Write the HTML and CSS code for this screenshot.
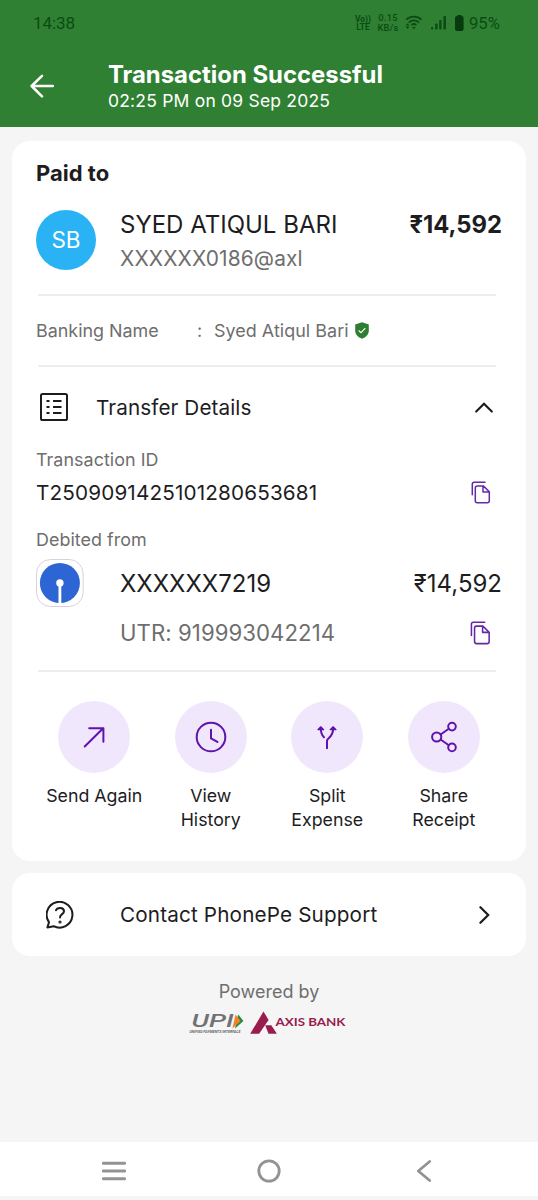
FILE: index.html
```html
<!DOCTYPE html>
<html lang="en">
<head>
<meta charset="utf-8">
<title>Transaction Successful</title>
<link rel="stylesheet" href="styles.css">
</head>
<body>
<header class="top">
  <div class="status">
    <span class="clock">14:38</span>
    <span class="lte"><span>Vo))</span><span>LTE</span></span>
    <span class="rate"><span>0.15</span><span>KB/s</span></span>
    <svg class="wifi" width="18" height="16" viewBox="0 0 18 16" fill="none" stroke="currentColor" stroke-width="1.7">
      <path d="M1.2 4.7a11 11 0 0 1 15.3 0M3.7 7.6a7.2 7.2 0 0 1 10.3 0M6.4 10.2a3.6 3.6 0 0 1 5 0"/>
      <path d="M8.9 14.2l-1.9-2.1h3.8z" fill="currentColor" stroke="none"/>
      <path d="M2.5 8.2l2 2.3h-4zM2.5 13.9l2-2.3h-4z" fill="currentColor" stroke="none"/>
    </svg>
    <svg class="signal" width="16" height="16" viewBox="0 0 16 16" fill="currentColor">
      <rect x="0" y="12" width="2.2" height="2.5" rx=".8"/><rect x="4.2" y="8.5" width="2.4" height="6" rx=".8"/><rect x="8.2" y="5" width="2.4" height="9.5" rx=".8"/><rect x="12.4" y="1" width="2.6" height="13.5" rx=".8"/>
    </svg>
    <svg class="battery" width="9" height="16" viewBox="0 0 9 16" fill="currentColor">
      <rect x="2.2" y="0" width="4.4" height="3" rx="1"/><rect x="0" y="1" width="8.6" height="15" rx="2"/>
    </svg>
    <span class="percent">95%</span>
  </div>
  <div class="bar">
    <svg class="back" width="24" height="24" viewBox="0 0 24 24" fill="none" stroke="#fff" stroke-width="2.5" stroke-linecap="round" stroke-linejoin="round"><path d="M22.8 12H1.8M12 1.8L1.6 12L12 22.4"/></svg>
    <div class="heading">
      <h1 class="title">Transaction Successful</h1>
      <p class="time">02:25 PM on 09 Sep 2025</p>
    </div>
  </div>
</header>

<main class="content">
  <section class="card details">
    <h2 class="paid">Paid to</h2>
    <div class="payee">
      <span class="avatar">SB</span>
      <div class="who">
        <span class="name">SYED ATIQUL BARI</span>
        <span class="vpa">XXXXXX0186@axl</span>
      </div>
      <strong class="amount">₹14,592</strong>
    </div>
    <hr class="rule">
    <div class="banking">
      <span class="bank-label">Banking Name</span><span class="colon">:</span><span class="bank-name">Syed Atiqul Bari</span>
      <svg width="14" height="17" viewBox="0 0 14 17"><path d="M7 .3L13.8 2.6V8.5C13.8 12.5 11 15.3 7 16.7C3 15.3 .2 12.5 .2 8.5V2.6z" fill="#2e7d32"/><path d="M3.7 8.5l2.3 2.2L10.3 6.2" fill="none" stroke="#fff" stroke-width="1.1"/></svg>
    </div>
    <hr class="rule">
    <div class="transfer">
      <svg width="28" height="28" viewBox="0 0 28 28" fill="none" stroke="#1d1d1f" stroke-width="2"><rect x="1" y="1" width="26" height="26" rx="1.6"/><path d="M6.5 8h3M6.5 14h3M6.5 20h3M13 8h8.5M13 14h8.5M13 20h8.5"/></svg>
      <span class="transfer-title">Transfer Details</span>
      <svg class="chevron-up" width="18" height="11" viewBox="0 0 18 11" fill="none" stroke="#1d1d1f" stroke-width="2.1" stroke-linecap="round" stroke-linejoin="miter"><path d="M1.2 9.6L9 1.8L16.8 9.6"/></svg>
    </div>
    <div class="label id-label">Transaction ID</div>
    <div class="line id-line">
      <span class="txn">T2509091425101280653681</span>
      <svg class="copy" width="20" height="23" viewBox="0 0 20 23"><use href="#copy"/></svg>
    </div>
    <div class="label from-label">Debited from</div>
    <div class="line account">
      <svg class="bank-logo" width="48" height="48" viewBox="0 0 48 48"><rect x=".5" y=".5" width="46.6" height="47" rx="14" fill="#fff" stroke="#d8d0df"/><circle cx="23.9" cy="24" r="20" fill="#2d66d4"/><circle cx="23.9" cy="24" r="3.7" fill="#fff"/><path d="M23.9 24v20.5" stroke="#fff" stroke-width="2.8"/></svg>
      <span class="number">XXXXXX7219</span>
      <span class="debit">₹14,592</span>
    </div>
    <div class="line utr-line">
      <span class="utr">UTR: 919993042214</span>
      <svg class="copy" width="21" height="24" viewBox="0 0 20 23"><use href="#copy"/></svg>
    </div>
    <hr class="rule last">
    <div class="actions">
      <div class="action">
        <span class="disc"><svg width="36" height="36" viewBox="0 0 36 36"><path d="M8.7 27.5L27.2 9.3M13.2 9.2H27.4V22.8"/></svg></span>
        <span class="caption">Send Again</span>
      </div>
      <div class="action">
        <span class="disc"><svg width="36" height="36" viewBox="0 0 36 36"><circle cx="18" cy="18" r="14.3"/><path d="M18 10.8v8.6l6.4 3.5"/></svg></span>
        <span class="caption">View<br>History</span>
      </div>
      <div class="action">
        <span class="disc"><svg width="36" height="36" viewBox="0 0 36 36"><path d="M18 29.2V21.8C18 18.4 24.1 19 24.1 9.5M15 18.2C13 16.3 11.8 14 11.8 9.5"/><path d="M8.9 10.6L11.8 7.8L14.7 10.6zM21.2 10.6L24.1 7.8L27 10.6z" fill="#5f13ad" stroke-width="1.2"/></svg></span>
        <span class="caption">Split<br>Expense</span>
      </div>
      <div class="action">
        <span class="disc"><svg width="36" height="36" viewBox="0 0 36 36"><circle cx="10.7" cy="18" r="4.6"/><circle cx="26" cy="7.6" r="3.8"/><circle cx="26" cy="28.4" r="3.8"/><path d="M14.6 15.5L22.8 9.8M14.6 20.5L22.8 26.2"/></svg></span>
        <span class="caption">Share<br>Receipt</span>
      </div>
    </div>
  </section>

  <section class="card support">
    <svg width="28" height="28" viewBox="0 0 28 28" fill="none" stroke="#1d1d1f" stroke-width="2" stroke-linecap="round" stroke-linejoin="round"><path d="M1.4 26.4L3 21.2A12.9 12.9 0 1 1 7.6 25.2z"/><path d="M10 9.3C11 6.2 18 5.8 18 10.3C18 13.4 14 13 14 16.5"/><circle cx="14" cy="21" r=".6"/></svg>
    <span class="support-title">Contact PhonePe Support</span>
    <svg class="chevron-right" width="11" height="18" viewBox="0 0 11 18" fill="none" stroke="#1d1d1f" stroke-width="2.2" stroke-linecap="round"><path d="M1.4 1.2L9.2 9L1.4 16.8"/></svg>
  </section>

  <footer class="powered">
    <span class="powered-text">Powered by</span>
    <div class="brands">
      <svg width="60" height="28" viewBox="-3 -2 60 28">
        <path d="M48.2 3.4L53.4 10L45 17.4z" fill="#238a43"/><path d="M45.6 3.4L50.6 10L42.4 17.4z" fill="#f58220"/>
        <text x="1.5" y="16.2" class="upi" textLength="42" lengthAdjust="spacingAndGlyphs">UPI</text>
        <text x="-.6" y="22.2" class="upi-sub" textLength="51" lengthAdjust="spacingAndGlyphs">UNIFIED PAYMENTS INTERFACE</text>
      </svg>
      <svg width="98" height="28" viewBox="0 -2 98 28" fill="#991c4f">
        <path d="M13.5 .5L18.6 9L9.1 22.8H.2z"/><path d="M15.2 14.2H21.3L26.9 22.8H18.5z"/>
        <text x="25.5" y="15" class="axis" textLength="70" lengthAdjust="spacingAndGlyphs">AXIS BANK</text>
      </svg>
    </div>
  </footer>
</main>

<nav class="nav">
  <svg width="24" height="24" viewBox="0 0 24 24" fill="none" stroke="#939393" stroke-width="2.9" stroke-linecap="round"><path d="M1.3 4.3H22.7M1.3 12H22.7M1.3 19.7H22.7"/></svg>
  <svg width="24" height="24" viewBox="0 0 24 24" fill="none" stroke="#939393" stroke-width="2.8"><circle cx="12" cy="12" r="10.2"/></svg>
  <svg width="24" height="24" viewBox="0 0 24 24" fill="none" stroke="#939393" stroke-width="2.8" stroke-linecap="round" stroke-linejoin="round"><path d="M17.7 2.5L6.3 12L17.7 21.5"/></svg>
</nav>

<svg class="defs" width="0" height="0"><defs>
  <g id="copy" fill="none" stroke="#6429a8" stroke-width="1.5" stroke-linecap="round" stroke-linejoin="round">
    <path d="M1.3 13.8V3.2Q1.3 1.2 3.3 1.2H14"/>
    <path d="M6.3 4.9H12.3L18.3 10.8V19.7Q18.3 21.7 16.3 21.7H6.3Q4.3 21.7 4.3 19.7V6.9Q4.3 4.9 6.3 4.9zM12 5V10.9H18"/>
  </g>
</defs></svg>
</body>
</html>
```
FILE: styles.css
```css
* { box-sizing: border-box; }
body {
  margin: 0;
  min-height: 1200px;
  display: flex;
  flex-direction: column;
  background: #f5f5f5;
  color: #1d1d1f;
  font-family: Inter, "Liberation Sans", sans-serif;
  white-space: nowrap;
}
h1, h2, p, hr { margin: 0; }
svg { display: block; flex: none; }
.defs { display: none; }

.top { height: 127px; background: #308034; }
.status {
  height: 44px;
  padding: 2px 0 0 33px;
  display: flex;
  align-items: center;
  color: #0b4c12;
  font-family: Roboto, sans-serif;
}
.clock { width: 322.5px; font-size: 17px; letter-spacing: -.1px; }
.lte, .rate {
  display: flex;
  flex-direction: column;
  align-items: center;
  font-size: 9.4px;
  font-weight: 500;
}
.lte { width: 15px; font-size: 8.5px; line-height: 8px; font-weight: 700; }
.rate { width: 21px; margin-left: 7px; line-height: 10px; letter-spacing: .2px; }
.wifi { margin-left: 6.5px; }
.signal { margin-left: 7.5px; }
.battery { margin-left: 8px; color: #073a0d; }
.percent { margin-left: 5.5px; font-size: 16.6px; }

.bar { display: flex; align-items: flex-start; padding-left: 30px; }
.back { margin-top: 30px; }
.heading { margin: 16px 0 0 54px; }
.title { font-size: 23.9px; line-height: 29px; font-weight: 700; color: #fff; }
.time { font-size: 17.5px; line-height: 24px; letter-spacing: .2px; color: #fff; }

.content { flex: 1; padding: 14px 12px 0; }
.card { background: #fff; border-radius: 18px; }
.details { height: 720px; padding: 0 24px; }
.paid { font-size: 22px; line-height: 64px; font-weight: 650; }
.payee { height: 89px; padding-top: 5px; display: flex; align-items: flex-start; }
.avatar {
  width: 60px;
  height: 60px;
  margin-right: 24px;
  border-radius: 50%;
  background: #29b3f5;
  color: #fff;
  font-size: 22.5px;
  line-height: 60px;
  text-align: center;
}
.who { flex: 1; display: flex; flex-direction: column; }
.name { font-size: 24px; line-height: 29px; }
.vpa { font-size: 20.9px; line-height: 39px; letter-spacing: .15px; color: #6e6e6e; }
.amount { font-size: 23.8px; line-height: 29px; font-weight: 700; }
.rule { height: 2px; border: 0; margin: 0 6px 0 2px; background: #ededed; }
.banking { height: 69px; padding-bottom: 1px; display: flex; align-items: center; font-size: 17.9px; color: #6e6e6e; }
.bank-label { width: 161px; }
.colon { width: 17px; }
.bank-name { margin-right: 6px; letter-spacing: .05px; }
.transfer { height: 81px; padding: 0 9px 1px 4px; display: flex; align-items: center; }
.transfer-title { flex: 1; margin-left: 28px; font-size: 20.7px; letter-spacing: .1px; }
.label { font-size: 17.9px; line-height: 24px; letter-spacing: .05px; color: #6e6e6e; }
.line { display: flex; align-items: center; }
.id-line { height: 40px; }
.txn, .utr { flex: 1; }
.txn { font-size: 20.7px; letter-spacing: .15px; }
.copy { margin-right: 11px; }
.from-label { margin-top: 16px; }
.account { height: 62px; }
.number { flex: 1; margin-left: 36px; font-size: 24px; }
.debit { font-size: 24px; }
.utr-line { height: 38px; padding-left: 84px; }
.utr { font-size: 22.2px; line-height: 26px; letter-spacing: .05px; color: #6e6e6e; }
.last { margin-top: 18px; }
.actions { display: grid; grid-template-columns: repeat(4, 1fr); padding-top: 28.5px; }
.action { display: flex; flex-direction: column; align-items: center; }
.disc {
  width: 72px;
  height: 72px;
  display: grid;
  place-items: center;
  border-radius: 50%;
  background: #f1e7fc;
}
.disc svg { fill: none; stroke: #5f13ad; stroke-width: 2; stroke-linecap: round; stroke-linejoin: round; }
.caption { margin-top: 11.5px; font-size: 17.8px; line-height: 24px; text-align: center; }

.support { height: 83px; margin-top: 12px; padding: 0 36px 0 34px; display: flex; align-items: center; }
.support-title { flex: 1; margin-left: 46px; font-size: 20.7px; line-height: 26px; letter-spacing: .15px; }

.powered { padding-top: 23px; display: flex; flex-direction: column; align-items: center; }
.powered-text { font-size: 18px; line-height: 25px; color: #6e6e6e; }
.brands { display: flex; gap: 3px; margin: 5px 4px 0 0; }
.upi { font: italic 500 17.6px Roboto, sans-serif; fill: #717276; }
.upi-sub { font: italic 700 3.8px Roboto, sans-serif; fill: #65666a; }
.axis { font: 700 11.4px Lato, sans-serif; }

.nav {
  height: 58px;
  padding: 17px 102px 0;
  display: flex;
  justify-content: space-between;
  background: #fff;
  border-bottom: 4px solid #f5f5f5;
}
```
